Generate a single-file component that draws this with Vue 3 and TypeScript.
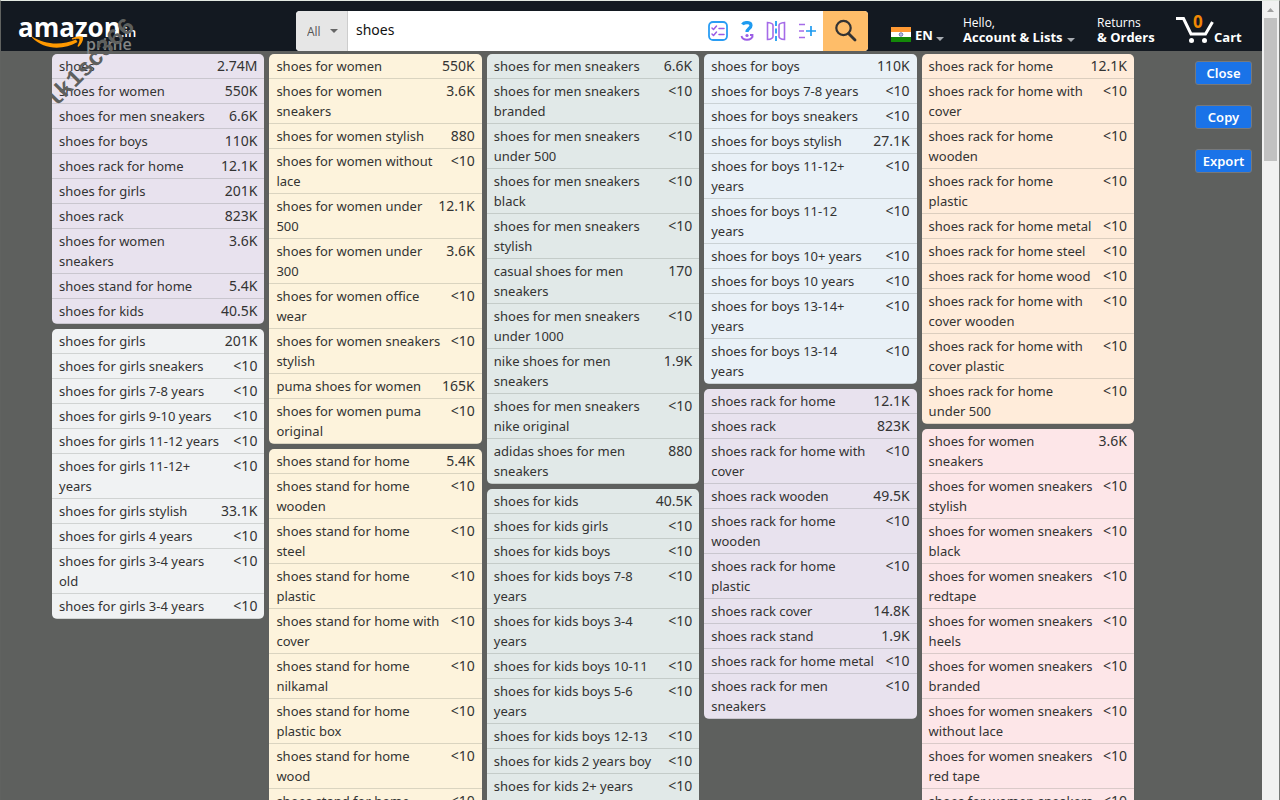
<script setup lang="ts">
import { ref } from 'vue'

type Row = [text: string, volume: string]
interface Card { tone: string; rows: Row[] }

const query = ref('shoes')
const department = ref('All')

const columns: Card[][] = [
  [
    { tone: 'lilac', rows: [
      ['shoes', '2.74M'], ['shoes for women', '550K'], ['shoes for men sneakers', '6.6K'],
      ['shoes for boys', '110K'], ['shoes rack for home', '12.1K'], ['shoes for girls', '201K'],
      ['shoes rack', '823K'], ['shoes for women\nsneakers', '3.6K'], ['shoes stand for home', '5.4K'],
      ['shoes for kids', '40.5K'],
    ] },
    { tone: 'silver', rows: [
      ['shoes for girls', '201K'], ['shoes for girls sneakers', '<10'], ['shoes for girls 7-8 years', '<10'],
      ['shoes for girls 9-10 years', '<10'], ['shoes for girls 11-12 years', '<10'],
      ['shoes for girls 11-12+\nyears', '<10'], ['shoes for girls stylish', '33.1K'],
      ['shoes for girls 4 years', '<10'], ['shoes for girls 3-4 years\nold', '<10'],
      ['shoes for girls 3-4 years', '<10'],
    ] },
  ],
  [
    { tone: 'cream', rows: [
      ['shoes for women', '550K'], ['shoes for women\nsneakers', '3.6K'], ['shoes for women stylish', '880'],
      ['shoes for women without\nlace', '<10'], ['shoes for women under\n500', '12.1K'],
      ['shoes for women under\n300', '3.6K'], ['shoes for women office\nwear', '<10'],
      ['shoes for women sneakers\nstylish', '<10'], ['puma shoes for women', '165K'],
      ['shoes for women puma\noriginal', '<10'],
    ] },
    { tone: 'cream', rows: [
      ['shoes stand for home', '5.4K'], ['shoes stand for home\nwooden', '<10'],
      ['shoes stand for home\nsteel', '<10'], ['shoes stand for home\nplastic', '<10'],
      ['shoes stand for home with\ncover', '<10'], ['shoes stand for home\nnilkamal', '<10'],
      ['shoes stand for home\nplastic box', '<10'], ['shoes stand for home\nwood', '<10'],
      ['shoes stand for home\nmetal', '<10'],
    ] },
  ],
  [
    { tone: 'sage', rows: [
      ['shoes for men sneakers', '6.6K'], ['shoes for men sneakers\nbranded', '<10'],
      ['shoes for men sneakers\nunder 500', '<10'], ['shoes for men sneakers\nblack', '<10'],
      ['shoes for men sneakers\nstylish', '<10'], ['casual shoes for men\nsneakers', '170'],
      ['shoes for men sneakers\nunder 1000', '<10'], ['nike shoes for men\nsneakers', '1.9K'],
      ['shoes for men sneakers\nnike original', '<10'], ['adidas shoes for men\nsneakers', '880'],
    ] },
    { tone: 'sage', rows: [
      ['shoes for kids', '40.5K'], ['shoes for kids girls', '<10'], ['shoes for kids boys', '<10'],
      ['shoes for kids boys 7-8\nyears', '<10'], ['shoes for kids boys 3-4\nyears', '<10'],
      ['shoes for kids boys 10-11', '<10'], ['shoes for kids boys 5-6\nyears', '<10'],
      ['shoes for kids boys 12-13', '<10'], ['shoes for kids 2 years boy', '<10'],
      ['shoes for kids 2+ years\nold', '<10'],
    ] },
  ],
  [
    { tone: 'sky', rows: [
      ['shoes for boys', '110K'], ['shoes for boys 7-8 years', '<10'], ['shoes for boys sneakers', '<10'],
      ['shoes for boys stylish', '27.1K'], ['shoes for boys 11-12+\nyears', '<10'],
      ['shoes for boys 11-12\nyears', '<10'], ['shoes for boys 10+ years', '<10'],
      ['shoes for boys 10 years', '<10'], ['shoes for boys 13-14+\nyears', '<10'],
      ['shoes for boys 13-14\nyears', '<10'],
    ] },
    { tone: 'lilac', rows: [
      ['shoes rack for home', '12.1K'], ['shoes rack', '823K'], ['shoes rack for home with\ncover', '<10'],
      ['shoes rack wooden', '49.5K'], ['shoes rack for home\nwooden', '<10'],
      ['shoes rack for home\nplastic', '<10'], ['shoes rack cover', '14.8K'], ['shoes rack stand', '1.9K'],
      ['shoes rack for home metal', '<10'], ['shoes rack for men\nsneakers', '<10'],
    ] },
  ],
  [
    { tone: 'peach', rows: [
      ['shoes rack for home', '12.1K'], ['shoes rack for home with\ncover', '<10'],
      ['shoes rack for home\nwooden', '<10'], ['shoes rack for home\nplastic', '<10'],
      ['shoes rack for home metal', '<10'], ['shoes rack for home steel', '<10'],
      ['shoes rack for home wood', '<10'], ['shoes rack for home with\ncover wooden', '<10'],
      ['shoes rack for home with\ncover plastic', '<10'], ['shoes rack for home\nunder 500', '<10'],
    ] },
    { tone: 'rose', rows: [
      ['shoes for women\nsneakers', '3.6K'], ['shoes for women sneakers\nstylish', '<10'],
      ['shoes for women sneakers\nblack', '<10'], ['shoes for women sneakers\nredtape', '<10'],
      ['shoes for women sneakers\nheels', '<10'], ['shoes for women sneakers\nbranded', '<10'],
      ['shoes for women sneakers\nwithout lace', '<10'], ['shoes for women sneakers\nred tape', '<10'],
      ['shoes for women sneakers\nwhite', '<10'],
    ] },
  ],
]

const actions = ['Close', 'Copy', 'Export']
</script>

<template>
  <div class="window">
    <div class="page">
      <header class="bar">
        <a class="logo" href="#" aria-label="amazon.in prime">
          <span class="brand">amazon</span><span class="tld">.in</span>
          <svg class="smile" viewBox="0 0 52 13" aria-hidden="true">
            <path d="M0 .5C13 9 30 9.500 44 3.500l1.500 2.500C31 14.500 12 14 0 1.500z" fill="#ff9900" />
            <path d="M40 2.200c4-2.200 9-2.600 10.800-1.400 1.200 2-.8 6.800-4.200 10l-1.200-.6c1.500-3 2.600-6.200 1.800-7.200-1.300-.8-4 0-7.300.4z" fill="#ff9900" />
          </svg>
          <span class="prime">prime</span>
        </a>

        <form class="search" @submit.prevent>
          <label class="dept">
            <select v-model="department" aria-label="Department"><option>All</option></select>
            <svg viewBox="0 0 8 4" aria-hidden="true"><path d="M0 0h8L4 4z" fill="#666" /></svg>
          </label>
          <input v-model="query" type="text" aria-label="Search" />
          <div class="tools">
            <button type="button" aria-label="Checklist">
              <svg width="20" height="20" viewBox="0 0 20 20" fill="none" stroke-linecap="round" stroke-linejoin="round">
                <rect x="1" y="1" width="18" height="18" rx="4" stroke="#2a9df4" stroke-width="1.800" />
                <path d="M4 7l1.500 1.500L8.500 5M4 13l1.500 1.500L8.500 11M11 7.500h5M11 13.500h5" stroke="#9b5de5" stroke-width="1.500" />
              </svg>
            </button>
            <button type="button" aria-label="Questions">
              <svg width="14" height="20" viewBox="0 0 14 20" fill="none">
                <path d="M2.500 3.500C4 1 11 .5 11 4.500c0 3-4 3.200-4 6.500" stroke="#1e9bf0" stroke-width="3.200" />
                <circle cx="7" cy="14.500" r="1.600" fill="#9b5de5" />
                <path d="M1.500 15c1 5 10 5 11 0M10 14h2.500v2.500" stroke="#9b5de5" stroke-width="1.800" />
              </svg>
            </button>
            <button type="button" aria-label="Compare">
              <svg width="20" height="20" viewBox="0 0 20 20" fill="none" stroke-width="1.600">
                <path d="M1.500 1.500c4 .3 5.500 1.500 5.500 3v11c0 1.500-1.500 2.700-5.500 3zM18.500 1.500c-4 .3-5.500 1.500-5.500 3v11c0 1.500 1.500 2.700 5.500 3z" stroke="#a56be8" />
                <path d="M10 0v5M10 7.500v5M10 15v5" stroke="#1e9bf0" stroke-width="1.800" />
              </svg>
            </button>
            <button type="button" aria-label="Add to list">
              <svg width="18" height="16" viewBox="0 0 18 16" fill="none" stroke-width="1.700">
                <path d="M1 1.500h6M1 8h5M1 14.500h6" stroke="#a56be8" />
                <path d="M8 8h10M13 3v10" stroke="#1e9bf0" />
              </svg>
            </button>
          </div>
          <button class="go" type="submit" aria-label="Go">
            <svg width="24" height="24" viewBox="0 0 24 24" fill="none" stroke="#333">
              <circle cx="9.500" cy="9" r="7.200" stroke-width="2.200" />
              <path d="M14.500 14.500l6.500 6.500" stroke-width="2.800" stroke-linecap="round" />
            </svg>
          </button>
        </form>

        <nav class="links">
          <a class="lang" href="#">
            <svg width="20" height="15" viewBox="0 0 20 15" aria-hidden="true">
              <path d="M0 0h20v5H0z" fill="#ff9933" /><path d="M0 5h20v5H0z" fill="#fff" /><path d="M0 10h20v5H0z" fill="#138808" />
              <circle cx="10" cy="7.500" r="1.800" fill="#b8bedc" stroke="#5964a8" stroke-width=".8" />
            </svg>
            <b>EN</b><i class="caret"></i>
          </a>
          <a class="account" href="#"><span>Hello,</span><b>Account &amp; Lists<i class="caret"></i></b></a>
          <a class="orders" href="#"><span>Returns</span><b>&amp; Orders</b></a>
          <a class="cart" href="#">
            <span class="trolley">
              <svg width="38" height="28" viewBox="0 0 38 28" fill="none" aria-hidden="true">
                <path d="M0 2.500h7.500L15 18h14.500L36.500 6" stroke="#fff" stroke-width="3" />
                <circle cx="15.500" cy="24.500" r="2.500" fill="#fff" /><circle cx="28.500" cy="24.500" r="2.500" fill="#fff" />
              </svg>
              <b class="count">0</b>
            </span>
            <b>Cart</b>
          </a>
        </nav>
      </header>

      <main class="board">
        <div class="columns">
          <div v-for="(column, c) in columns" :key="c" class="column">
            <table v-for="(card, k) in column" :key="k" :class="['card', card.tone]">
              <tbody>
                <tr v-for="row in card.rows" :key="row[0]">
                  <td class="term">{{ row[0] }}</td>
                  <td class="volume">{{ row[1] }}</td>
                </tr>
              </tbody>
            </table>
          </div>
        </div>
        <aside class="actions">
          <button v-for="a in actions" :key="a" type="button">{{ a }}</button>
        </aside>
      </main>
      <span class="watermark">elk1sc366</span>
    </div>
    <div class="scrollbar" aria-hidden="true">
      <svg viewBox="0 0 7 4"><path d="M0 4h7L3.500 0z" fill="#a0a0a0" /></svg>
      <div class="thumb"></div>
    </div>
  </div>
</template>

<style>
html, body { background: #5e605e; overflow: hidden; }
</style>

<style scoped>
* { box-sizing: border-box; }
.window { display: flex; height: 100vh; overflow: hidden; border: solid #777977; border-width: 1px 1px 0; border-top-color: #e3e9e2; border-left-color: #606260; font: 14px/20px "Noto Sans", "Open Sans", sans-serif; color: #333; }
.page { position: relative; flex: 1; min-width: 0; overflow: hidden; background: #5e605e; }
button { font: inherit; cursor: pointer; }
a { color: #fff; text-decoration: none; }

.bar { display: flex; height: 50px; background: #131921; }
.logo { position: relative; width: 295px; flex: none; padding-left: 17px; padding-top: 10px; }
.brand { font: bold 26px/32px "Open Sans", sans-serif; }
.tld { font: 600 13px/20px "Open Sans", sans-serif; }
.smile { position: absolute; left: 31px; top: 35px; width: 52px; }
.prime { position: absolute; left: 85px; top: 34px; font: 600 16px/18px "Open Sans", sans-serif; color: #858786; }

.search { display: flex; flex: none; width: 572px; height: 40px; margin-top: 10px; background: #fff; border-radius: 4px; overflow: hidden; }
.dept { position: relative; width: 52px; background: #e6e6e6; border-right: 1px solid #cdcdcd; }
.dept select { width: 100%; height: 100%; padding: 0 0 0 11px; border: 0; background: none; appearance: none; font: 12px "Open Sans", sans-serif; color: #555; }
.dept svg { position: absolute; right: 9px; top: 18px; width: 8px; pointer-events: none; }
.search input { flex: 1; min-width: 0; border: 0; outline: 0; padding: 0 8px 3px; font: 14px "Noto Sans", sans-serif; color: #111; }
.tools { display: flex; align-items: center; gap: 12px; padding-right: 7px; }
.tools button { display: flex; padding: 0; border: 0; background: none; }
.go { display: grid; place-items: center; width: 45px; padding: 0; border: 0; background: #febd69; }

.links { display: flex; flex: 1; font: 12px/15px "Open Sans", sans-serif; }
.links a { display: flex; flex-direction: column; padding-top: 14px; white-space: nowrap; }
.links b { font-size: 13px; line-height: 14px; }
.caret { display: inline-block; margin-left: 4px; border: solid transparent; border-width: 4px 4px 0; border-top-color: #a7acb2; }
.links .lang { flex-direction: row; align-items: center; width: 72px; padding: 17px 0 0; margin-left: 23px; }
.lang b { margin-left: 4px; }
.lang .caret { margin-left: 3px; margin-top: 8px; }
.links .account { width: 134px; }
.links .orders { width: 79px; }
.links .cart { flex-direction: row; align-items: flex-end; padding: 0 0 7px; }
.trolley { position: relative; display: flex; }
.links .count { position: absolute; left: 17px; top: -2px; font-size: 17px; line-height: 16px; color: #f08804; }

.board { display: flex; padding: 3px 10px 0 51px; }
.columns { flex: 1; display: grid; grid-template-columns: repeat(5, minmax(0, 1fr)); gap: 5px; align-items: start; }
.column { display: grid; gap: 5px; }
.card { width: 100%; border-collapse: separate; border-spacing: 0; border-radius: 5px; overflow: hidden; }
td { padding: 2px 0; vertical-align: top; border-bottom: 1px solid rgba(80, 90, 80, 0.2); white-space: pre; }
.term { padding-left: 7px; width: 100%; max-width: 0; font-size: 13px; }
.volume { padding-right: 7px; text-align: right; }
.lilac { background: #e8e2ee; }
.silver { background: #f0f2f3; }
.cream { background: #fdf3dc; }
.sage { background: #e1e9e8; }
.sky { background: #e9f1f7; }
.peach { background: #ffecda; }
.rose { background: #fde6e8; }

.actions { display: flex; flex-direction: column; gap: 20px; margin-left: 61px; padding-top: 7px; }
.actions button { width: 57px; height: 24px; padding: 0; border: 1px solid #77797b; border-radius: 3px; background: #1a73e8; color: #fff; font-size: 13px; font-weight: 600; line-height: 20px; }

.watermark { position: absolute; left: 20px; top: 56px; font: bold 24px/24px "Liberation Mono", monospace; color: #5e605e; transform: rotate(-45deg); pointer-events: none; }

.scrollbar { display: flex; flex-direction: column; align-items: center; width: 17px; background: #f1f1f1; }
.scrollbar svg { width: 7px; margin: 7px 0 6px; }
.thumb { width: 13px; height: 143px; background: #c1c1c1; }
</style>
